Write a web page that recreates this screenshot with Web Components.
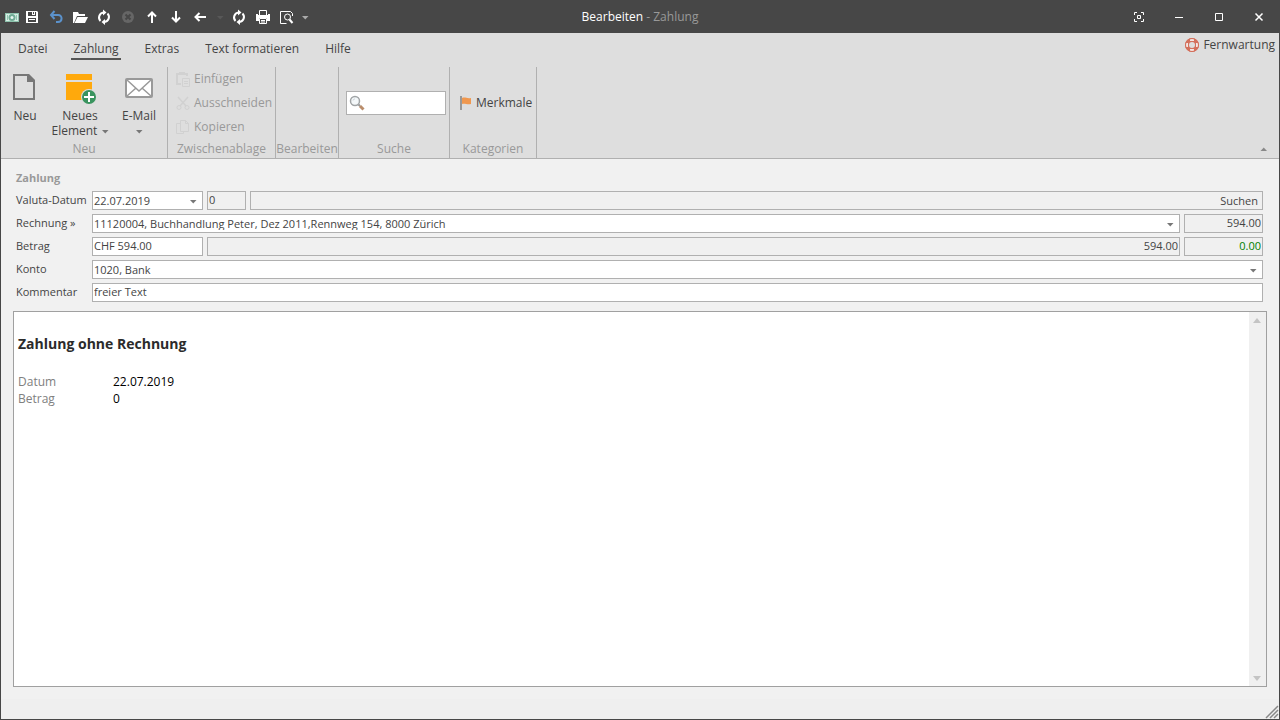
<!DOCTYPE html>
<html lang="de">
<head>
<meta charset="utf-8">
<title>Bearbeiten - Zahlung</title>
<style>
    html,body{height:100%;margin:0;}
    body{font:12px/16px "Open Sans","Noto Sans",sans-serif;color:#444;background:#f1f1f1;}
</style>
</head>
<body>
<app-window>
    <title-bar slot="title" heading="Bearbeiten" subject="Zahlung">
        <app-icon name="money"></app-icon>
        <tool-button icon="save" label="Speichern"></tool-button>
        <tool-button icon="undo" label="Rückgängig"></tool-button>
        <tool-button icon="open" label="Öffnen"></tool-button>
        <tool-button icon="refresh" label="Aktualisieren"></tool-button>
        <tool-button icon="cancel" label="Abbrechen" disabled></tool-button>
        <tool-button icon="up" label="Vorheriges"></tool-button>
        <tool-button icon="down" label="Nächstes"></tool-button>
        <tool-button icon="back" label="Zurück"></tool-button>
        <tool-button icon="caret" label="Verlauf" class="dim"></tool-button>
        <tool-button icon="refresh" label="Neu laden"></tool-button>
        <tool-button icon="print" label="Drucken"></tool-button>
        <tool-button icon="preview" label="Vorschau"></tool-button>
        <tool-button icon="caret" label="Anpassen" class="narrow"></tool-button>
        <tool-button slot="window" icon="focus" label="Vollbild" class="wide"></tool-button>
        <tool-button slot="window" icon="minimize" label="Minimieren" class="wide"></tool-button>
        <tool-button slot="window" icon="maximize" label="Maximieren" class="wide"></tool-button>
        <tool-button slot="window" icon="close" label="Schliessen" class="wide"></tool-button>
    </title-bar>

    <ribbon-bar slot="ribbon">
        <ribbon-tab slot="tab">Datei</ribbon-tab>
        <ribbon-tab slot="tab" active>Zahlung</ribbon-tab>
        <ribbon-tab slot="tab">Extras</ribbon-tab>
        <ribbon-tab slot="tab">Text formatieren</ribbon-tab>
        <ribbon-tab slot="tab">Hilfe</ribbon-tab>
        <ribbon-button slot="help" icon="lifebuoy">Fernwartung</ribbon-button>

        <ribbon-group label="Neu" style="--group-width:167px">
            <big-button icon="page" style="--button-width:48px">Neu</big-button>
            <big-button icon="element" style="--button-width:62px">Neues<br>Element <app-icon name="caret"></app-icon></big-button>
            <big-button icon="mail" style="--button-width:56px">E-Mail<br><app-icon name="caret"></app-icon></big-button>
        </ribbon-group>
        <ribbon-group label="Zwischenablage" stacked style="--group-width:108px">
            <ribbon-button icon="paste" disabled>Einfügen</ribbon-button>
            <ribbon-button icon="cut" disabled>Ausschneiden</ribbon-button>
            <ribbon-button icon="copy" disabled>Kopieren</ribbon-button>
        </ribbon-group>
        <ribbon-group label="Bearbeiten" style="--group-width:63px"></ribbon-group>
        <ribbon-group label="Suche" middle style="--group-width:111px">
            <search-box></search-box>
        </ribbon-group>
        <ribbon-group label="Kategorien" middle style="--group-width:87px">
            <ribbon-button icon="flag">Merkmale</ribbon-button>
        </ribbon-group>
    </ribbon-bar>

    <form-section heading="Zahlung">
        <form-row>
            <form-field label="Valuta-Datum" type="select" value="22.07.2019" style="--field-width:111px"></form-field>
            <form-field label="Nummer" nolabel readonly value="0" style="--field-width:39px"></form-field>
            <form-field label="Suchen" nolabel type="button" grow></form-field>
        </form-row>
        <form-row>
            <form-field label="Rechnung »" type="select" value="11120004, Buchhandlung Peter, Dez 2011,Rennweg 154, 8000 Zürich" grow></form-field>
            <form-field label="Rechnungsbetrag" nolabel readonly right value="594.00" style="--field-width:79px"></form-field>
        </form-row>
        <form-row>
            <form-field label="Betrag" value="CHF 594.00" style="--field-width:111px"></form-field>
            <form-field label="Total" nolabel readonly right value="594.00" grow></form-field>
            <form-field label="Differenz" nolabel readonly right value="0.00" style="--field-width:79px;--field-color:#008000"></form-field>
        </form-row>
        <form-row>
            <form-field label="Konto" type="select" value="1020, Bank" grow></form-field>
        </form-row>
        <form-row>
            <form-field label="Kommentar" value="freier Text" grow></form-field>
        </form-row>
    </form-section>

    <detail-view heading="Zahlung ohne Rechnung"></detail-view>
</app-window>

<script>
(()=>{

    // 16x16 unless a box is given below
    const icons = {
        money: '<rect x="1" y="4" width="14" height="9" fill="#8fc3ae"/><rect x="2" y="5" width="12" height="7" fill="#d8eee5"/><circle cx="8" cy="8.500" r="3.500" fill="#6fab94"/><circle cx="8" cy="8.500" r="1.500" fill="#e9f6f1"/><path d="M3 6h1v5H3zM12 6h1v5h-1z" fill="#8fc3ae"/>',
        save: '<path d="M2 2h11l1 1v11H2z" fill="#fff"/><path d="M4 3h8v4H4zM4 9h8v4H4z" fill="#474747"/><path d="M8 3h3v3H8z" fill="#fff"/><path d="M9 3h1v2H9z" fill="#474747"/><path d="M5 10h6v1H5z" fill="#fff"/>',
        undo: '<path d="M6.500 2 3 6l3.500 4M3.500 6H10c5 0 4.500 7 0 7H8" fill="none" stroke="#5b92cc" stroke-width="2"/>',
        open: '<path d="M1 14V3h5l1 2h6v2H5l-3 7z" fill="#fff"/><path d="M5.500 8H16l-3 6H2.500z" fill="#fff"/>',
        refresh: '<path d="M4.500 12A5 5 0 0 1 7.500 3.500M11.500 4.500A5 5 0 0 1 8.500 13" fill="none" stroke="#fff" stroke-width="2"/><path d="M7 .5 10.500 3.500 7 6.500zM9 10v6l-3.500-3z" fill="#fff"/>',
        cancel: '<circle cx="8" cy="8" r="6" fill="#666"/><path d="m5.500 5.500 5 5m0-5-5 5" stroke="#474747" stroke-width="2"/>',
        up: '<path d="M8 14V4M4 7.500 8 3.500l4 4" fill="none" stroke="#fff" stroke-width="2"/>',
        down: '<path d="M8 2v10M4 8.500l4 4 4-4" fill="none" stroke="#fff" stroke-width="2"/>',
        back: '<path d="M14 8H4M7.500 4 3.500 8l4 4" fill="none" stroke="#fff" stroke-width="2"/>',
        caret: '<path d="M1 3h6.500L4.250 6.500z" fill="currentColor"/>',
        arrow: '<path d="M0 2h8L4 7z" fill="currentColor"/>',
        print: '<path d="M4.500 6V1.500h7V6" fill="none" stroke="#fff"/><path d="M1 5h2v2h10V5h2v7h-3V9H4v3H1z" fill="#fff"/><path d="M3 6h10v3H3z" fill="#fff"/><path d="M4.500 9.500h7v5h-7zM6 11.500h4M6 13h4" fill="none" stroke="#fff"/>',
        preview: '<path d="M12.500 6V3.500L10.500 1.500h-10v12h6" fill="none" stroke="#fff" transform="translate(1 1)"/><circle cx="8.500" cy="8" r="3" fill="none" stroke="#fff"/><path d="m10.500 10.500 3 3.500" stroke="#fff" stroke-width="2"/>',
        focus: '<path d="M3.500 6V3.500H6M10 3.500h2.500V6M12.500 10v2.500H10M6 12.500H3.500V10M6.500 6.500h3v3h-3z" fill="none" stroke="#fff"/>',
        minimize: '<path d="M4 8h8v1H4z" fill="#fff"/>',
        maximize: '<path d="M4.500 4.500h7v7h-7z" fill="none" stroke="#fff"/>',
        close: '<path d="m4.500 4.500 7 7m0-7-7 7" stroke="#fff" stroke-width="1.500"/>',
        lifebuoy: '<circle cx="8" cy="8" r="5" fill="none" stroke="#d4705c" stroke-width="4"/><path d="M6 2h4v2H6zM6 12h4v2H6zM2 6h2v4H2zM12 6h2v4h-2z" fill="#f5e6e2"/><circle cx="8" cy="8" r="6.500" fill="none" stroke="#d4705c"/>',
        paste: '<path d="M6 13H2V3h10v2" fill="none" stroke="#d1d1d1" stroke-width="2"/><path d="M4 1h6v3H4z" fill="#d1d1d1"/><path d="M7.500 7.500h7v8h-7zM9 10.500h4M9 12.500h4" fill="none" stroke="#d1d1d1"/>',
        cut: '<path d="m3 2 8 9M13 2l-8 9" stroke="#d1d1d1" stroke-width="1.500"/><circle cx="4" cy="12.500" r="2" fill="none" stroke="#d1d1d1"/><circle cx="12" cy="12.500" r="2" fill="none" stroke="#d1d1d1"/>',
        copy: '<path d="M5 4.500H1.500v10h7V13M5.500 1.500h5l3 3v8h-8zM10.500 1.500v3h3" fill="none" stroke="#d1d1d1"/>',
        flag: '<path d="M3 1h2v14H3z" fill="#999"/><path d="M5 3c3-1.500 5 1 9 0v6c-4 1-6-1-9 0z" fill="#f0984f"/>',
        search: '<circle cx="6" cy="6" r="4.500" fill="#f4f8fa" stroke="#a0a4a6" stroke-width="1.500"/><path d="M4 5.500C4 4.500 5 4 6 4" fill="none" stroke="#c8d0d4"/><path d="m9.500 9.500 1.500 1.500" stroke="#999" stroke-width="2"/><path d="m11 11 3.500 3.500" stroke="#ba8d6b" stroke-width="3"/>',
        page: '<path d="M5 4h14l6 6v18H5z" fill="none" stroke="#777" stroke-width="2"/><path d="M18 3h2l6 6v2h-8z" fill="#777"/>',
        element: '<path d="M3 3h26v6H3zM3 11h26v18H3z" fill="#ffa90c"/><circle cx="26" cy="26" r="8" fill="#dedede"/><circle cx="26" cy="26" r="7" fill="#3a945f"/><path d="M21 25h4v-4h2v4h4v2h-4v4h-2v-4h-4z" fill="#fff"/>',
        mail: '<rect x="3" y="8" width="26" height="18" rx="1" fill="#fff" stroke="#999" stroke-width="2"/><path d="m4 9 12 11L28 9M4 25l9-8M28 25l-9-8" fill="none" stroke="#999" stroke-width="1.500"/>',
        grip: '<path d="M3 15 15 3M7 15l8-8M11 15l4-4" stroke="#888" stroke-width="1.500"/>'
    };
    const sizes = { caret:8, arrow:8, page:32, element:34, mail:32 };

    // common base: fill the shadow root from render()
    class BaseElement extends HTMLElement {
        constructor(){
            super();
            this.attachShadow({mode:'open'});
        }
        connectedCallback(){
            this.shadowRoot.innerHTML = this.render();
        }
        attr(name){
            return this.getAttribute(name) || '';
        }
    }

    const buttonReset = 'button{display:flex;align-items:center;margin:0;padding:0;border:0;background:none;font:inherit;color:inherit;}';

    class AppIcon extends BaseElement {
        render(){
            const name = this.attr('name');
            const size = sizes[name] || 16;
            return `
            <style>
                :host{display:inline-block;flex:none;width:${size}px;height:${size}px;}
                svg{display:block;}
            </style>
            <svg width="${size}" height="${size}" viewBox="0 0 ${size} ${size}" aria-hidden="true">${icons[name]}</svg>`;
        }
    }

    class ToolButton extends BaseElement {
        render(){
            return `
            <style>
                :host{display:block;width:24px;height:100%;color:#aaa;}
                :host(.wide){width:40px;}
                :host(.narrow){width:12px;}
                :host(.dim){width:15px;color:#585858;}
                ${buttonReset}
                button{justify-content:center;width:100%;height:100%;}
            </style>
            <button type="button" aria-label="${this.attr('label')}"${this.hasAttribute('disabled') ? ' disabled' : ''}>
                <app-icon name="${this.attr('icon')}"></app-icon>
            </button>`;
        }
    }

    class TitleBar extends BaseElement {
        render(){
            return `
            <style>
                :host{display:grid;grid-template-columns:1fr auto 1fr;align-items:center;height:32px;background:#474747;color:#fff;}
                .tools,.window{display:flex;align-items:center;height:100%;}
                .tools{padding-left:3px;}
                .window{justify-content:flex-end;}
                .subject{color:#999;}
            </style>
            <div class="tools"><slot></slot></div>
            <div class="heading">${this.attr('heading')} <span class="subject">- ${this.attr('subject')}</span></div>
            <div class="window"><slot name="window"></slot></div>`;
        }
    }

    class RibbonTab extends BaseElement {
        render(){
            return `
            <style>
                :host{display:block;}
                ${buttonReset}
                button{padding:0 2px;height:20px;border-bottom:2px solid transparent;}
                :host([active]) button{border-color:#555;}
            </style>
            <button type="button"><slot></slot></button>`;
        }
    }

    class RibbonBar extends BaseElement {
        render(){
            return `
            <style>
                :host{display:block;background:#dedede;border-bottom:1px solid #b0b0b0;}
                .tabs{display:flex;align-items:center;gap:22px;height:34px;padding:0 4px 0 15px;box-sizing:border-box;}
                .help{margin-left:auto;align-self:flex-start;}
                .groups{display:flex;height:91px;}
                ${buttonReset}
                .collapse{margin-left:auto;align-self:flex-end;padding:0 11px 4px 0;color:#888;}
                .collapse app-icon{transform:rotate(180deg);}
            </style>
            <div class="tabs"><slot name="tab"></slot><div class="help"><slot name="help"></slot></div></div>
            <div class="groups">
                <slot></slot>
                <button type="button" class="collapse" aria-label="Menüband minimieren"><app-icon name="caret"></app-icon></button>
            </div>`;
        }
    }

    class RibbonGroup extends BaseElement {
        render(){
            return `
            <style>
                :host{display:flex;flex-direction:column;box-sizing:border-box;min-width:var(--group-width);border-right:1px solid #b0b0b0;}
                .body{display:flex;flex:1;}
                :host([stacked]) .body{flex-direction:column;padding-left:7px;}
                :host([middle]) .body{align-items:center;padding:0 0 1px 7px;}
                .label{line-height:18px;text-align:center;color:#999;}
            </style>
            <div class="body"><slot></slot></div>
            <div class="label">${this.attr('label')}</div>`;
        }
    }

    class BigButton extends BaseElement {
        render(){
            return `
            <style>
                :host{display:block;width:var(--button-width);line-height:15px;}
                ${buttonReset}
                button{flex-direction:column;width:100%;height:100%;padding-top:4px;white-space:nowrap;}
                .icon{display:flex;height:37px;}
                ::slotted(app-icon){color:#777;}
            </style>
            <button type="button">
                <span class="icon"><app-icon name="${this.attr('icon')}"></app-icon></span>
                <span><slot></slot></span>
            </button>`;
        }
    }

    class RibbonButton extends BaseElement {
        render(){
            return `
            <style>
                :host{display:block;}
                :host([disabled]){color:#999;}
                ${buttonReset}
                button{gap:3px;height:24px;}
            </style>
            <button type="button"${this.hasAttribute('disabled') ? ' disabled' : ''}>
                <app-icon name="${this.attr('icon')}"></app-icon><slot></slot>
            </button>`;
        }
    }

    class SearchBox extends BaseElement {
        render(){
            return `
            <style>
                :host{display:flex;align-items:center;box-sizing:border-box;width:100px;height:24px;padding:0 2px;border:1px solid #b0b0b0;background:#fff;}
                input{flex:1;min-width:0;border:0;padding:0 2px;font:inherit;color:inherit;background:none;}
            </style>
            <app-icon name="search"></app-icon>
            <input type="text" aria-label="Suche">`;
        }
    }

    class FormSection extends BaseElement {
        render(){
            return `
            <style>
                :host{display:flex;flex-direction:column;gap:4px;padding:11px 16px 9px 15px;font-size:11px;}
                h2{margin:0 0 1px;font-size:11px;line-height:16px;color:#999;}
            </style>
            <h2>${this.attr('heading')}</h2>
            <slot></slot>`;
        }
    }

    class FormRow extends BaseElement {
        render(){
            return `
            <style>
                :host{display:flex;gap:4px;}
            </style>
            <slot></slot>`;
        }
    }

    class FormField extends BaseElement {
        control(){
            const label = this.attr('label');
            const value = this.attr('value');
            switch(this.attr('type')){
                case 'select':
                    return `<div class="select"><select id="control"><option>${value}</option></select><app-icon name="caret"></app-icon></div>`;
                case 'button':
                    return `<button type="button" id="control">${label}</button>`;
                default:
                    return `<input type="text" id="control" aria-label="${label}" value="${value}"${this.hasAttribute('readonly') ? ' readonly' : ''}>`;
            }
        }
        render(){
            const label = this.hasAttribute('nolabel') ? '' : `<label for="control">${this.attr('label')}</label>`;
            return `
            <style>
                :host{display:flex;height:19px;line-height:17px;}
                :host([grow]){flex:1;}
                label{width:76px;flex:none;}
                input,select,button{appearance:none;box-sizing:border-box;width:var(--field-width,100%);height:19px;margin:0;padding:0 1px 2px;border:1px solid #b0b0b0;border-radius:0;background:#fff;font:inherit;color:var(--field-color,#444);}
                :host([grow]) input,:host([grow]) select{width:100%;flex:1;min-width:0;}
                :host([readonly]) input{background:#f0f0f0;}
                :host([right]) input{text-align:right;}
                button{padding:0 4px;text-align:right;background:#f0f0f0;}
                .select{display:grid;align-items:center;flex:1;}
                .select > *{grid-area:1/1;}
                .select app-icon{justify-self:end;margin-right:6px;color:#777;pointer-events:none;}
            </style>
            ${label}${this.control()}`;
        }
    }

    class DetailView extends BaseElement {
        render(){
            return `
            <style>
                :host{display:flex;flex:1;min-height:0;margin:0 12px;border:1px solid #a0a0a0;background:#fff;color:#000;}
                .content{flex:1;padding:22px 4px;}
                h1{margin:0 0 19px;font-size:14px;line-height:20px;color:#2b2b2b;}
                table{border-collapse:collapse;}
                th,td{padding:0;line-height:17px;text-align:left;}
                th{width:95px;font-weight:normal;color:#808080;}
                .scroll{display:flex;flex-direction:column;justify-content:space-between;width:17px;background:#f0f0f0;color:#c4c4c4;}
                ${buttonReset}
                .scroll button{width:16px;height:17px;justify-content:center;}
                .up app-icon{transform:rotate(180deg);}
            </style>
            <div class="content">
                <h1>${this.attr('heading')}</h1>
                <table>
                    <tr><th scope="row">Datum</th><td>22.07.2019</td></tr>
                    <tr><th scope="row">Betrag</th><td>0</td></tr>
                </table>
            </div>
            <div class="scroll">
                <button type="button" class="up" aria-label="Nach oben"><app-icon name="arrow"></app-icon></button>
                <button type="button" aria-label="Nach unten"><app-icon name="arrow"></app-icon></button>
            </div>`;
        }
    }

    class AppWindow extends BaseElement {
        render(){
            return `
            <style>
                :host{display:flex;flex-direction:column;box-sizing:border-box;min-height:100vh;border:1px solid #474747;}
                .status{display:flex;justify-content:flex-end;align-items:flex-end;height:20px;margin-top:12px;background:#efefef;}
            </style>
            <slot name="title"></slot>
            <slot name="ribbon"></slot>
            <slot></slot>
            <div class="status"><app-icon name="grip"></app-icon></div>`;
        }
    }

    customElements.define('app-icon',AppIcon);
    customElements.define('tool-button',ToolButton);
    customElements.define('title-bar',TitleBar);
    customElements.define('ribbon-tab',RibbonTab);
    customElements.define('ribbon-bar',RibbonBar);
    customElements.define('ribbon-group',RibbonGroup);
    customElements.define('big-button',BigButton);
    customElements.define('ribbon-button',RibbonButton);
    customElements.define('search-box',SearchBox);
    customElements.define('form-section',FormSection);
    customElements.define('form-row',FormRow);
    customElements.define('form-field',FormField);
    customElements.define('detail-view',DetailView);
    customElements.define('app-window',AppWindow);

})();
</script>
</body>
</html>
